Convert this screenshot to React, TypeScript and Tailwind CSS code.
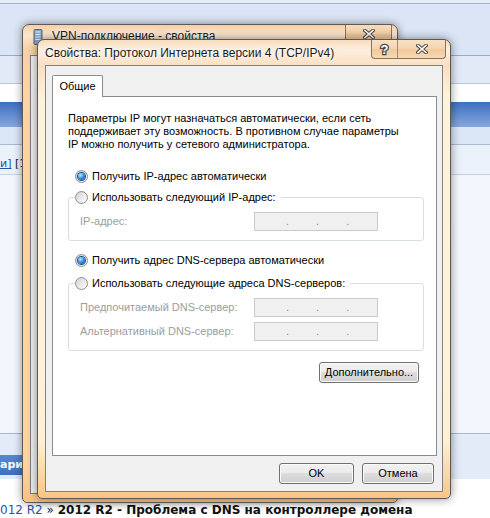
import React from 'react'

const Radio = ({ checked = false }: { checked?: boolean }) => (
  <span className="flex h-[13px] w-[13px] shrink-0 items-center justify-center rounded-full border border-[#8e8f8f] bg-[linear-gradient(135deg,#d3d3d3,#fdfdfd)]">
    {checked && (
      <span className="h-[7px] w-[7px] rounded-full bg-[radial-gradient(circle_at_35%_30%,#b4ecff,#2c86d6_55%,#0c3f87)] shadow-[0_0_0_1px_#174f8f]" />
    )}
  </span>
)

const RadioRow = ({ checked, label }: { checked?: boolean; label: string }) => (
  <div className="flex h-[13px] items-center gap-[4px]">
    <Radio checked={checked} />
    <span className="whitespace-nowrap">{label}</span>
  </div>
)

const IpInput = () => (
  <div className="flex h-[19px] w-[124px] items-center border border-[#cacaca] bg-[#f0f0f0] text-[#8a8a8a]">
    <span className="w-[31px]" />
    <span>.</span>
    <span className="w-[27px]" />
    <span>.</span>
    <span className="w-[27px]" />
    <span>.</span>
  </div>
)

const Btn = ({ children, className = '' }: { children: React.ReactNode; className?: string }) => (
  <div
    className={`flex h-[21px] items-center justify-center rounded-[3px] border border-[#707070] bg-[linear-gradient(#f2f2f2_0%,#ebebeb_49%,#dddddd_50%,#cfcfcf_100%)] shadow-[inset_0_0_0_1px_#fbfbfb] ${className}`}
  >
    {children}
  </div>
)

const CloseGlyph = () => (
  <svg width="12" height="10" viewBox="0 0 12 10">
    <path d="M2 1.5 L10 8.5 M10 1.5 L2 8.5" stroke="#474747" strokeWidth="3.6" strokeLinecap="square" />
    <path d="M2 1.5 L10 8.5 M10 1.5 L2 8.5" stroke="#ffffff" strokeWidth="1.6" strokeLinecap="square" />
  </svg>
)

const App = () => {
  return (
    <div className="relative h-[518px] w-[490px] overflow-hidden bg-[#f3f7fd] font-['Liberation_Sans',Arial,sans-serif]">
      {/* web page behind the windows */}
      <div className="flex h-full flex-col font-['DejaVu_Sans',sans-serif]">
        <div className="h-[3px] bg-[#e6edf8]" />
        <div className="h-px bg-[#a3b3cb]" />
        <div className="h-[51px] bg-[#dbe5f5]" />
        <div className="h-px bg-[#9aabc4]" />
        <div className="h-[27px] bg-[#e2eaf7]" />
        <div className="h-px bg-[#b9c8dd]" />
        <div className="h-[18px] bg-white" />
        <div className="h-[26px] bg-[linear-gradient(#3d6fc0,#86a7dd)]" />
        <div className="h-[17px] bg-[#dbe6f6]" />
        <div className="h-px bg-[#a8b9d1]" />
        <div className="flex h-[29px] items-end bg-[#ebf1fa] pb-[3px] text-[11px] leading-[14px] whitespace-nowrap">
          <span className="text-[#2255a8] underline">и]</span>
          <span className="text-[#222]">&nbsp;[1</span>
        </div>
        <div className="h-px bg-[#c4d1e3]" />
        <div className="h-[259px] bg-[#f3f7fd]" />
        <div className="h-px bg-[#a8b8d0]" />
        <div className="h-[45px] bg-[#e3ebf8] pt-[21px]">
          <div className="flex h-[20px] w-[60px] items-center rounded-r-[3px] bg-[linear-gradient(#5a88cf,#3f6fbd)] text-[11px] font-bold text-white">
            арит
          </div>
        </div>
        <div className="flex-1 bg-white pt-[23px] text-[12px] leading-[16px] whitespace-nowrap">
          <span className="text-[#2255a8]">012 R2</span>
          <span className="text-[#222]"> » </span>
          <span className="font-bold text-[#111]">2012 R2 - Проблема с DNS на контроллере домена</span>
        </div>
      </div>

      {/* back window */}
      <div className="absolute left-[22px] top-[24px] flex h-[479px] w-[376px] flex-col rounded-t-[7px] rounded-b-[5px] border border-[#5e5a55] bg-[linear-gradient(180deg,#f5cfa6_0px,#fbe6cf_10px,#f7d2a8_24px,#fdd59e_60px,#fdd49a_440px,#f6c27f_479px)] shadow-[0_0_9px_rgba(0,0,0,0.45)]">
        <div className="relative flex h-[30px] items-start gap-[9px] pl-[10px] pt-[4px]">
          <svg width="10" height="16" viewBox="0 0 10 16">
            <rect x="1" y="0.5" width="8" height="15" rx="1" fill="#8aa3c4" stroke="#4d6587" />
            <path d="M2.5 3h5M2.5 5.5h5M2.5 8h5M2.5 10.5h5" stroke="#e8f0fb" strokeWidth="1" />
          </svg>
          <span className="text-[12px] leading-[15px] text-[#1a1a1a] [text-shadow:0_0_6px_#fff,0_0_3px_#fff]">
            VPN-подключение - свойства
          </span>
          <div className="absolute right-[5px] top-0 flex h-[18px] w-[47px] items-center justify-center rounded-b-[4px] border border-t-0 border-[#8a735c] bg-[linear-gradient(#f6dcc0,#f3cfa6_50%,#efc393_51%,#f5d6b2)]">
            <CloseGlyph />
          </div>
        </div>
        <div className="mx-[7px] mb-[8px] flex-1 border border-[#7d7d7d] bg-[#f0f0f0]" />
      </div>

      {/* front window */}
      <div className="absolute left-[37px] top-[39px] flex h-[460px] w-[414px] flex-col rounded-t-[7px] rounded-b-[5px] border border-[#5c5853] bg-[linear-gradient(180deg,#f7dcbd_0px,#fcefe0_10px,#fae0c2_25px,#fff3dc_60px,#fff1d6_400px,#f8c480_460px)] shadow-[0_0_10px_rgba(0,0,0,0.45)]">
        <div className="relative flex h-[25px] items-center pl-[7px] pt-[2px]">
          <span className="text-[12px] leading-[15px] whitespace-nowrap text-[#1a1a1a] [text-shadow:0_0_7px_#fff,0_0_3px_#fff]">
            Свойства: Протокол Интернета версии 4 (TCP/IPv4)
          </span>
          <div className="absolute right-[4px] top-0 flex h-[19px] rounded-b-[4px] border border-t-0 border-[#8a735c] bg-[linear-gradient(#f8e1c6,#f5d4ae_50%,#f1c899_51%,#f6d9b6)]">
            <div className="flex w-[26px] items-center justify-center border-r border-[#a48a70] text-[13px] font-bold leading-none text-white [-webkit-text-stroke:2.5px_#474747] [paint-order:stroke_fill]">
              ?
            </div>
            <div className="flex w-[47px] items-center justify-center">
              <CloseGlyph />
            </div>
          </div>
        </div>

        {/* client area */}
        <div className="mx-[7px] mb-[6px] flex flex-1 flex-col border border-[#828282] bg-[#f0f0f0] pl-[6px] pt-[9px] text-[11px] leading-[13px] text-black">
          <div className="relative z-10 -mb-px flex h-[22px] w-[51px] items-center justify-center rounded-t-[2px] border border-b-0 border-[#898c95] bg-white">
            Общие
          </div>
          <div className="flex h-[360px] w-[385px] flex-col border border-[#898c95] bg-white pl-[15px] pt-[15px]">
            <p className="whitespace-nowrap">
              Параметры IP могут назначаться автоматически, если сеть
              <br />
              поддерживает эту возможность. В противном случае параметры
              <br />
              IP можно получить у сетевого администратора.
            </p>
            <div className="ml-[7px] mt-[19px]">
              <RadioRow checked label="Получить IP-адрес автоматически" />
            </div>
            <fieldset className="mt-[8px] w-[356px] rounded-[3px] border border-[#d5dfe5] px-[11px] pb-[9px] pt-[8px]">
              <legend className="ml-[-5px] bg-white pr-[5px]">
                <RadioRow label="Использовать следующий IP-адрес:" />
              </legend>
              <div className="flex items-center text-[#9d9d9d]">
                <span className="w-[174px]">IP-адрес:</span>
                <IpInput />
              </div>
            </fieldset>
            <div className="ml-[7px] mt-[13px]">
              <RadioRow checked label="Получить адрес DNS-сервера автоматически" />
            </div>
            <fieldset className="mt-[10px] w-[356px] rounded-[3px] border border-[#d5dfe5] px-[11px] pb-[9px] pt-[8px]">
              <legend className="ml-[-5px] bg-white pr-[5px]">
                <RadioRow label="Использовать следующие адреса DNS-серверов:" />
              </legend>
              <div className="flex flex-col gap-[5px] text-[#9d9d9d]">
                <div className="flex items-center">
                  <span className="w-[174px]">Предпочитаемый DNS-сервер:</span>
                  <IpInput />
                </div>
                <div className="flex items-center">
                  <span className="w-[174px]">Альтернативный DNS-сервер:</span>
                  <IpInput />
                </div>
              </div>
            </fieldset>
            <div className="mt-[11px] flex w-[356px] justify-end pr-[5px]">
              <Btn className="w-[100px]">Дополнительно...</Btn>
            </div>
          </div>
          <div className="mt-[7px] flex justify-end gap-[8px] pr-[8px]">
            <Btn className="w-[75px]">OK</Btn>
            <Btn className="w-[72px]">Отмена</Btn>
          </div>
        </div>
      </div>
    </div>
  )
}

export default App
